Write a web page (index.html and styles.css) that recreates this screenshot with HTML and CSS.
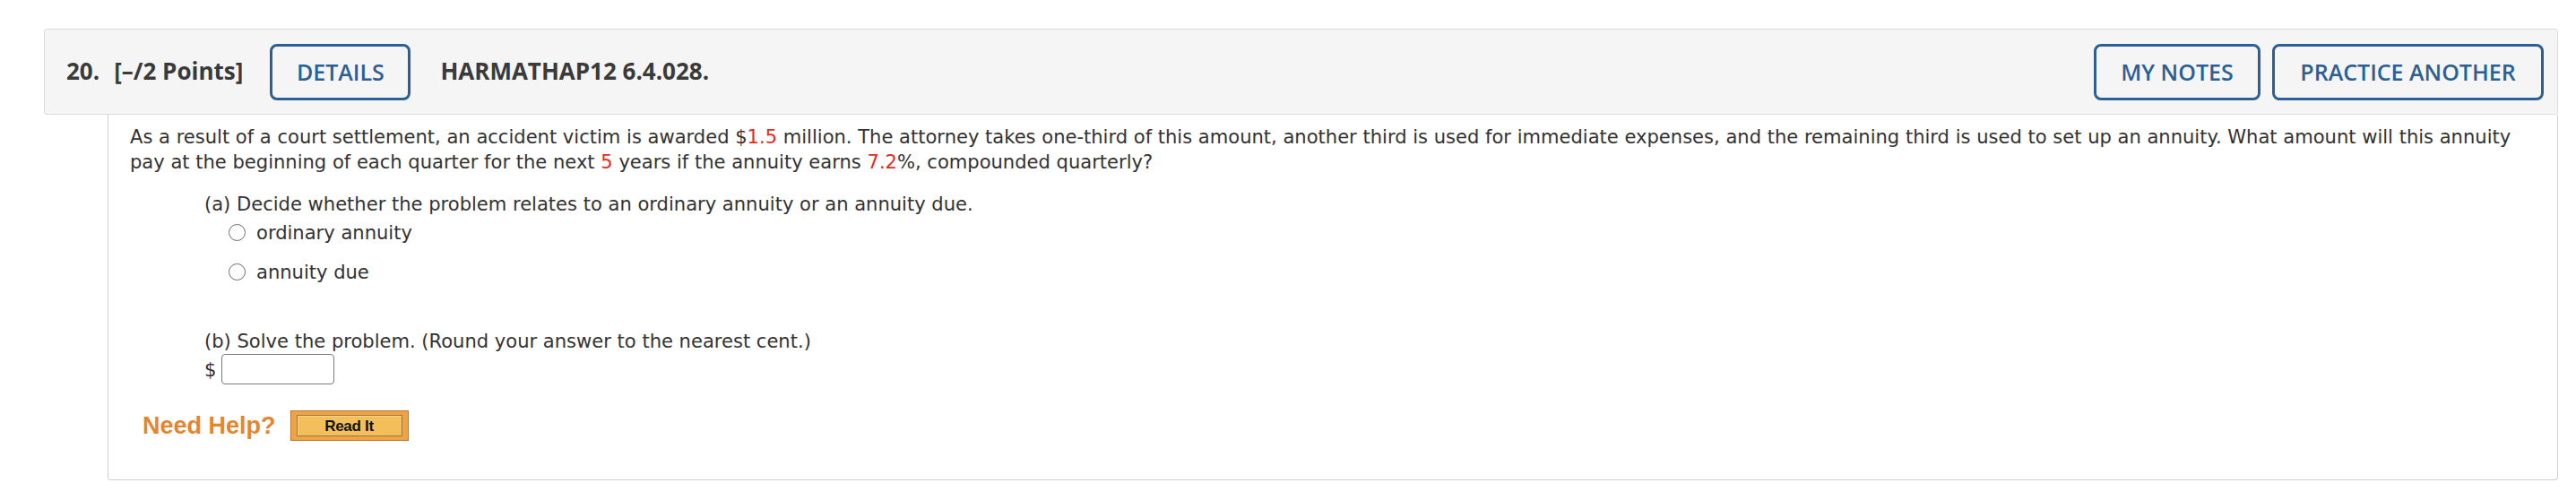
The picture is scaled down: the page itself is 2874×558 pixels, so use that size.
FILE: index.html
```html
<!DOCTYPE html>
<html lang="en">
<head>
<meta charset="utf-8">
<title>Question 20</title>
<link rel="stylesheet" href="styles.css">
</head>
<body>
<div class="question">
  <div class="qhead">
    <span class="qnum">20.</span>
    <span class="qpts">[–/2 Points]</span>
    <button class="hbtn btn-details" type="button">DETAILS</button>
    <span class="qid">HARMATHAP12 6.4.028.</span>
    <span class="spacer"></span>
    <button class="hbtn btn-notes" type="button">MY NOTES</button>
    <button class="hbtn btn-practice" type="button">PRACTICE ANOTHER</button>
  </div>
  <div class="qbody">
    <p class="stem">As a result of a court settlement, an accident victim is awarded $<span class="red">1.5</span> million. The attorney takes one-third of this amount, another third is used for immediate expenses, and the remaining third is used to set up an annuity. What amount will this annuity pay at the beginning of each quarter for the next <span class="red">5</span> years if the annuity earns <span class="red">7.2</span>%, compounded quarterly?</p>
    <div class="part part-a">
      <p class="prompt">(a) Decide whether the problem relates to an ordinary annuity or an annuity due.</p>
      <div class="choice"><span class="radio"></span><span>ordinary annuity</span></div>
      <div class="choice second"><span class="radio"></span><span>annuity due</span></div>
    </div>
    <div class="part part-b">
      <p class="prompt">(b) Solve the problem. (Round your answer to the nearest cent.)</p>
      <div class="answer"><span class="dollar">$</span><span class="field"></span></div>
    </div>
    <div class="help">
      <span class="needhelp">Need Help?</span>
      <span class="readit"><span class="readit-inner">Read It</span></span>
    </div>
  </div>
</div>
</body>
</html>
```
FILE: styles.css
```css
html, body {
  margin: 0;
  padding: 0;
  background: #ffffff;
}
body {
  font-family: "DejaVu Sans", Verdana, sans-serif;
  color: #333333;
}
.question {
  margin: 32px 0 0 49px;
  width: 2805px;
}
.qhead {
  display: flex;
  align-items: center;
  box-sizing: border-box;
  height: 96px;
  padding: 0 15px 0 24px;
  background: #f5f5f5;
  border: 1px solid #dcdcdc;
  border-radius: 3px;
  font-family: "Open Sans", sans-serif;
  color: #3a3a3a;
  line-height: 1.2;
}
.qnum, .qpts, .qid {
  font-weight: 700;
  font-size: 26px;
}
.qnum {
  margin-right: 16px;
}
.qpts {
  margin-right: 30px;
}
.qid {
  margin-left: 33px;
}
.spacer {
  flex: 1;
}
.hbtn {
  box-sizing: border-box;
  height: 63px;
  padding: 0;
  background: transparent;
  border: 3px solid #2c6094;
  border-radius: 8px;
  font-family: "Open Sans", sans-serif;
  font-weight: 600;
  font-size: 25px;
  color: #2c6094;
  text-align: center;
}
.btn-details {
  width: 157px;
}
.btn-notes {
  width: 186px;
}
.btn-practice {
  width: 303px;
}
.hbtn + .hbtn {
  margin-left: 13px;
}
.qbody {
  box-sizing: border-box;
  margin-left: 71px;
  height: 408px;
  padding: 11px 0 0 24px;
  border: 1px solid #cfcfcf;
  border-top: none;
  border-radius: 0 0 4px 4px;
  font-size: 21.05px;
  line-height: 29px;
}
p {
  margin: 0;
}
.stem {
  width: 2680px;
  line-height: 28px;
}
.red {
  color: #e8291c;
}
.part {
  padding-left: 83px;
}
.part-a {
  margin-top: 18px;
}
.choice {
  display: flex;
  align-items: center;
  gap: 12px;
  margin-left: 27px;
  margin-top: 3px;
}
.choice.second {
  margin-top: 15px;
}
.radio {
  box-sizing: border-box;
  width: 19px;
  height: 19px;
  border: 1.5px solid #6e6e6e;
  border-radius: 50%;
  background: #fff;
}
.part-b {
  margin-top: 48px;
}
.answer {
  display: flex;
  align-items: center;
  gap: 6px;
}
.field {
  box-sizing: border-box;
  width: 126px;
  height: 34px;
  border: 1px solid #7a7a7a;
  border-radius: 4px;
  background: #fff;
}
.help {
  display: flex;
  align-items: center;
  gap: 16px;
  margin: 29px 0 0 14px;
}
.needhelp {
  font-family: "Liberation Sans", Arial, sans-serif;
  font-weight: 700;
  font-size: 27px;
  color: #e4862f;
}
.readit {
  box-sizing: border-box;
  display: flex;
  width: 132px;
  height: 34px;
  padding: 4px 6px;
  border: 1px solid #c0772b;
  background: #eda447;
}
.readit-inner {
  flex: 1;
  display: flex;
  align-items: center;
  justify-content: center;
  border: 1px solid #a5723c;
  background: #f3bf5b;
  box-shadow: inset 1px 1px 0 #f8d68f;
  font-family: "Liberation Sans", Arial, sans-serif;
  font-weight: 700;
  font-size: 17px;
  color: #111;
  letter-spacing: -0.3px;
}
```
